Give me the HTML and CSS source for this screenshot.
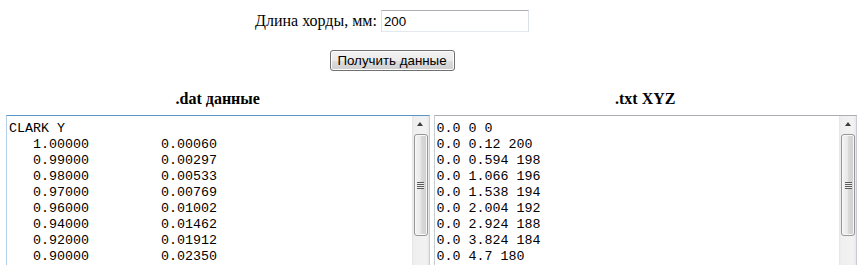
FILE: index.html
```html
<!DOCTYPE html>
<html>
<head>
    <meta charset="UTF-8">
    <title>Профиль крыла</title>
    <link rel="stylesheet" href="styles.css">
</head>
<body>
    <div class="chord-row">
        <label for="chordInput">Длина хорды, мм:</label>
        <input type="text" id="chordInput" class="chord-input" value="200">
    </div>

    <div class="actions">
        <button id="convertBtn">Получить данные</button>
    </div>

    <div class="columns">
        <div class="column">
            <h3>.dat данные</h3>
            <div class="data-frame is-focused">
                <textarea id="datData" class="data-box" wrap="off" spellcheck="false">CLARK Y
   1.00000         0.00060
   0.99000         0.00297
   0.98000         0.00533
   0.97000         0.00769
   0.96000         0.01002
   0.94000         0.01462
   0.92000         0.01912
   0.90000         0.02350
   0.88000         0.02776
   0.86000         0.03190
   0.84000         0.03591
   0.82000         0.03979
   0.80000         0.04354
   0.78000         0.04716
   0.76000         0.05064
   0.74000         0.05398
   0.72000         0.05718
   0.70000         0.06023
   0.65000         0.06729
   0.60000         0.07349
   0.55000         0.07883
   0.50000         0.08330
   0.45000         0.08688
   0.40000         0.08953
   0.35000         0.09113
   0.30000         0.09153
   0.25000         0.09043
   0.20000         0.08730
   0.15000         0.08124
   0.10000         0.07095
   0.07500         0.06333
   0.05000         0.05382
   0.02500         0.04052
   0.01250         0.03060
   0.00000         0.01410
   0.01250         0.00400
   0.02500         0.00224
   0.05000         0.00086
   0.07500         0.00024
   0.10000         0.00000
   0.15000         0.00000
   0.20000         0.00000
   0.25000         0.00000
   0.30000         0.00000
   0.40000         0.00000
   0.50000         0.00000
   0.60000         0.00000</textarea>
                <div class="scrollbar">
                    <div class="scroll-btn"><span class="arrow-up"></span></div>
                    <div class="scroll-thumb"><span class="grip"></span></div>
                </div>
            </div>
        </div>
        <div class="column">
            <h3>.txt XYZ</h3>
            <div class="data-frame">
                <textarea id="xyzData" class="data-box" wrap="off" spellcheck="false">0.0 0 0
0.0 0.12 200
0.0 0.594 198
0.0 1.066 196
0.0 1.538 194
0.0 2.004 192
0.0 2.924 188
0.0 3.824 184
0.0 4.7 180
0.0 5.552 176
0.0 6.38 172
0.0 7.182 168
0.0 7.958 164
0.0 8.708 160
0.0 9.432 156
0.0 10.128 152
0.0 10.796 148
0.0 11.436 144
0.0 12.046 140
0.0 13.458 130
0.0 14.698 120
0.0 15.766 110
0.0 16.66 100
0.0 17.376 90
0.0 17.906 80
0.0 18.226 70
0.0 18.306 60
0.0 18.086 50
0.0 17.46 40
0.0 16.248 30
0.0 14.19 20
0.0 12.666 15
0.0 10.764 10
0.0 8.104 5
0.0 6.12 2.5
0.0 2.82 0
0.0 0.8 2.5
0.0 0.448 5
0.0 0.172 10
0.0 0.048 15
0.0 0 20
0.0 0 30
0.0 0 40
0.0 0 50
0.0 0 60
0.0 0 80
0.0 0 100
0.0 0 120</textarea>
                <div class="scrollbar">
                    <div class="scroll-btn"><span class="arrow-up"></span></div>
                    <div class="scroll-thumb"><span class="grip"></span></div>
                </div>
            </div>
        </div>
    </div>
</body>
</html>
```

FILE: styles.css
```css
html, body {
    overflow: hidden;
}

body {
    margin: 0;
    font-family: 'Liberation Serif', 'Times New Roman', serif;
    font-size: 16px;
    color: #000;
    background: #fff;
}

.chord-row {
    display: flex;
    justify-content: center;
    align-items: center;
    gap: 4px;
    padding: 10px 78px 0 0;
}

.chord-input {
    width: 148px;
    height: 22px;
    box-sizing: border-box;
    margin: 0;
    padding: 1px 2px;
    border: 1px solid #dbdfe6;
    border-top-color: #abadb3;
    border-bottom-color: #e3e9ef;
    font-family: 'Liberation Sans', Arial, sans-serif;
    font-size: 13.333px;
    color: #000;
}

.actions {
    display: flex;
    justify-content: center;
    padding: 18px 78px 0 0;
}

button {
    width: 125px;
    height: 21px;
    padding: 0;
    border: 1px solid #707070;
    border-radius: 3px;
    background: linear-gradient(to bottom, #f2f2f2 0%, #ebebeb 50%, #dddddd 51%, #cfcfcf 100%);
    font-family: 'Liberation Sans', Arial, sans-serif;
    font-size: 13.333px;
    color: #000;
    box-shadow: inset 0 0 0 1px #fcfcfc;
}

.columns {
    display: flex;
    gap: 4px;
    padding: 19px 5px 0 6px;
}

.column {
    flex: 1;
    min-width: 0;
    display: flex;
    flex-direction: column;
}

.column h3 {
    margin: 0 0 7px;
    font-size: 16px;
    line-height: 18px;
    font-weight: bold;
    text-align: center;
}

.data-frame {
    display: flex;
    height: 300px;
    border: 1px solid #c9ccd1;
    border-top-color: #abadb3;
    background: #fff;
}

.data-frame.is-focused {
    border-color: #b5d1ea;
    border-top-color: #5b96c6;
}

.data-box {
    flex: 1;
    min-width: 0;
    margin: 0;
    padding: 5px 2px 2px;
    border: none;
    font-family: 'Liberation Mono', 'Courier New', monospace;
    font-size: 13.333px;
    line-height: 16px;
    color: #000;
    white-space: pre;
    overflow: hidden;
    resize: none;
    outline: none;
}

.scrollbar {
    width: 17px;
    flex-shrink: 0;
    display: flex;
    flex-direction: column;
    background: linear-gradient(to right, #e4e4e4 0, #efefef 2px, #f2f2f2 14px, #e8e8e8 17px);
}

.scroll-btn {
    height: 17px;
    display: flex;
    align-items: center;
    justify-content: center;
}

.arrow-up {
    width: 0;
    height: 0;
    border-left: 3.5px solid transparent;
    border-right: 3.5px solid transparent;
    border-bottom: 4px solid #3c3c3c;
    margin-top: -1px;
}

.scroll-thumb {
    height: 102px;
    margin: 1px 1px 0 2px;
    box-sizing: border-box;
    border: 1px solid #979797;
    border-radius: 3px;
    background: linear-gradient(to right, #f4f4f4 0%, #e9e9e9 45%, #d9d9d9 55%, #cfcfcf 100%);
    box-shadow: inset 0 0 0 1px #f8f8f8;
    display: flex;
    align-items: center;
    justify-content: center;
}

.grip {
    width: 7px;
    height: 7px;
    background: repeating-linear-gradient(to bottom, #5c5c5c 0 1px, #eeeeee 1px 2px);
}
```
